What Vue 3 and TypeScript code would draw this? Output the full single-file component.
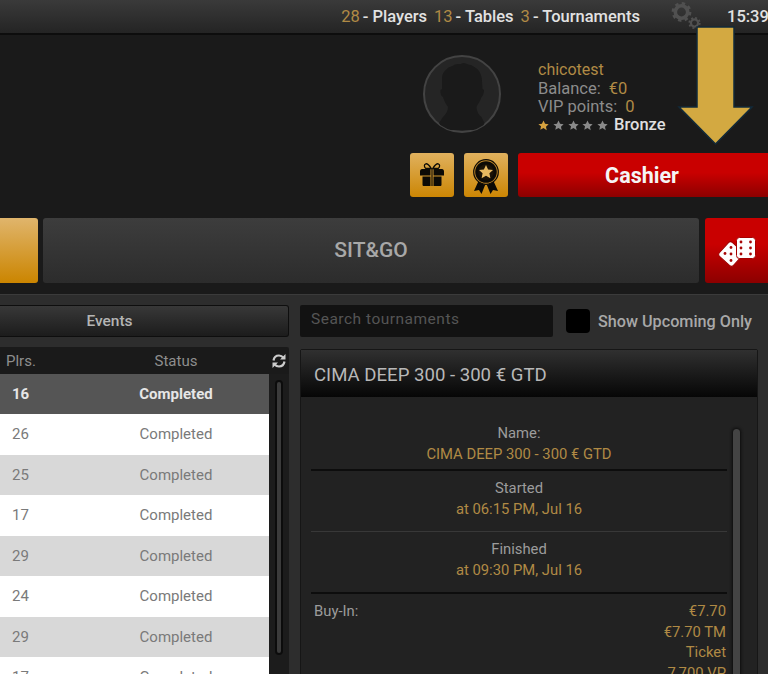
<script setup lang="ts">
const rows = [
  { plrs: 16, selected: true },
  { plrs: 26 },
  { plrs: 25 },
  { plrs: 17 },
  { plrs: 29 },
  { plrs: 24 },
  { plrs: 29 },
  { plrs: 17 },
]
const stars = [true, false, false, false, false]
const starPath = 'M6 .5l1.7 3.6 3.9.5-2.9 2.7.8 3.9L6 8.8 2.5 10.7l.8-3.9L.4 4.6l3.9-.5z'
const buyIn = ['€7.70', '€7.70 TM', 'Ticket', '7,700 VP']
</script>

<template>
  <div class="page">
    <header class="topbar">
      <div class="counts">
        <span class="num">28</span><span class="lbl">- Players</span>
        <span class="num">13</span><span class="lbl">- Tables</span>
        <span class="num">3</span><span class="lbl">- Tournaments</span>
      </div>
      <svg class="gears" width="30" height="28" viewBox="0 0 30 28" fill="none" stroke="#505050">
        <circle cx="10.5" cy="10" r="6.2" stroke-width="3.6" />
        <circle cx="10.5" cy="10" r="8.6" stroke-width="2.6" stroke-dasharray="3.4 3.35" />
        <circle cx="23.5" cy="21" r="3.6" stroke-width="2.2" />
        <circle cx="23.5" cy="21" r="5.2" stroke-width="1.8" stroke-dasharray="2 2.08" />
      </svg>
      <span class="clock">15:39</span>
    </header>

    <section class="profile">
      <div class="account">
        <svg class="avatar" width="80" height="80" viewBox="0 0 80 80">
          <defs>
            <clipPath id="avatar-clip"><circle cx="40" cy="40" r="38" /></clipPath>
          </defs>
          <circle cx="40" cy="40" r="38" fill="#252525" stroke="#434343" stroke-width="2" />
          <path
            clip-path="url(#avatar-clip)"
            fill="#1a1a1a"
            d="M20 25c0-5 2-8 5-10 2-3 5-2 7-4 3-2 6 0 9-2 3 0 5 2 8 2 3 2 6 3 8 6 2 3 3 7 3 10l.5 8 1.500 1c0 3-1 6-2.500 7-1 4-4 7-5 10 0 4 2 8 5 10l3 6-3 7H21l-4-7 4-6c3-3 5-6 5-10-2-3-4-6-5-10-2-1-3-4-2.500-7l1.500-1z"
          />
        </svg>
        <div class="player">
          <div class="name">chicotest</div>
          <div class="stat">Balance: <b>€0</b></div>
          <div class="stat">VIP points: <b>0</b></div>
          <div class="level">
            <svg
              v-for="(on, i) in stars"
              :key="i"
              width="11"
              height="11"
              viewBox="0 0 12 12"
            >
              <path :d="starPath" :fill="on ? '#d6a23f' : '#8a8a8a'" />
            </svg>
            <span>Bronze</span>
          </div>
        </div>
      </div>
      <div class="actions">
        <button class="gold">
          <svg width="28" height="28" viewBox="0 0 28 28" fill="#0c0a06">
            <path d="M13.300 7.500C11 4 9.500 2.500 7.800 2.800 5.800 3.200 6 6.300 7.800 7.500zM14.700 7.500C17 4 18.500 2.500 20.200 2.800 22.200 3.200 22 6.300 20.200 7.500z" fill="none" stroke="#0c0a06" stroke-width="1.300" />
            <path d="M2 10.500c0-1.500.8-2.500 2-2.500h8.500v6.500H2zM15.500 8H24c1.200 0 2 1 2 2.500v4H15.500zM4.500 15.500h8v9.500H6c-1 0-1.500-.5-1.500-1.500zM15.500 15.500h8v8c0 1-.5 1.500-1.500 1.500h-6.500zM13.400 8h1.200v17h-1.200z" />
          </svg>
        </button>
        <button class="gold">
          <svg width="32" height="42" viewBox="0 0 32 42" fill="none" stroke="#0c0a06">
            <path d="M8.500 27L4 37l5-1 2.500 4 4-10zM23.500 27l4.500 10-5-1-2.500 4-4-10z" fill="#0c0a06" stroke="none" />
            <circle cx="16" cy="18" r="12.300" stroke-width="1.200" fill="#c48a2a" />
            <circle cx="16" cy="18" r="9.300" fill="#1a1206" stroke-width="3" />
            <path d="M16 11l2.100 4.500 4.900.5-3.600 3.300 1 4.900-4.400-2.500-4.400 2.500 1-4.900-3.600-3.300 4.900-.5z" fill="#e6b860" stroke="none" />
          </svg>
        </button>
        <button class="cashier">Cashier</button>
      </div>
      <svg class="arrow" width="78" height="122" viewBox="0 0 78 122">
        <path d="M20 1h37v80h18L38.500 118 2 81h18z" fill="#d3a941" stroke="#122a3a" stroke-width="1.500" />
      </svg>
    </section>

    <nav class="tabs">
      <div class="tab tab-gold"></div>
      <div class="tab tab-sit">SIT&amp;GO</div>
      <div class="tab tab-red">
        <svg width="40" height="36" viewBox="0 0 40 36">
          <rect x="4.500" y="11.500" width="19" height="19" rx="3" transform="rotate(42 14 21)" fill="#fff" stroke="#a00000" stroke-width="1" />
          <g fill="#a80808">
            <circle cx="14" cy="14.500" r="1.400" />
            <circle cx="8" cy="20.500" r="1.400" />
            <circle cx="14" cy="21" r="1.400" />
            <circle cx="14" cy="27.500" r="1.400" />
          </g>
          <rect x="19.500" y="4.500" width="19" height="21" rx="3" fill="#fff" stroke="#a60000" stroke-width="1" />
          <g fill="#a80808">
            <circle cx="24" cy="9" r="1.400" /><circle cx="33.500" cy="9" r="1.400" />
            <circle cx="24" cy="15" r="1.400" /><circle cx="33.500" cy="15" r="1.400" />
            <circle cx="24" cy="21" r="1.400" /><circle cx="33.500" cy="21" r="1.400" />
          </g>
        </svg>
      </div>
    </nav>

    <main class="main">
      <section class="left">
        <button class="events">Events</button>
        <div class="list">
          <div class="list-head">
            <span class="col-plrs">Plrs.</span>
            <span class="col-status">Status</span>
            <svg class="refresh" width="16" height="16" viewBox="0 0 16 16" fill="none" stroke="#ccc" stroke-width="2.200">
              <path d="M2.500 7.500C3 4.500 5.300 2.500 8 2.500c1.800 0 3.300.8 4.300 2.200" />
              <path d="M13.500 8.500c-.5 3-2.800 5-5.500 5-1.800 0-3.300-.8-4.300-2.200" />
              <path d="M14.500 1v5.500H9zM1.500 15V9.500H7z" fill="#ccc" stroke="none" />
            </svg>
          </div>
          <div class="list-body">
            <div class="rows">
              <div
                v-for="(r, i) in rows"
                :key="i"
                class="row"
                :class="{ selected: r.selected, alt: i % 2 === 0 }"
              >
                <span class="col-plrs">{{ r.plrs }}</span>
                <span class="col-status">Completed</span>
              </div>
            </div>
            <div class="scroll"><div class="thumb"></div></div>
          </div>
        </div>
      </section>

      <section class="right">
        <div class="filters">
          <div class="search">Search tournaments</div>
          <span class="check"></span>
          <span class="check-label">Show Upcoming Only</span>
        </div>
        <div class="detail">
          <h2 class="detail-head">CIMA DEEP 300 - 300 € GTD</h2>
          <div class="detail-body">
            <div class="info">
              <div class="block first">
                <div>Name:</div>
                <div class="val">CIMA DEEP 300 - 300 € GTD</div>
              </div>
              <div class="block">
                <div>Started</div>
                <div class="val">at 06:15 PM, Jul 16</div>
              </div>
              <div class="block soft">
                <div>Finished</div>
                <div class="val">at 09:30 PM, Jul 16</div>
              </div>
              <div class="pair">
                <div>Buy-In:</div>
                <div class="amounts">
                  <div v-for="b in buyIn" :key="b" class="val">{{ b }}</div>
                </div>
              </div>
            </div>
            <div class="detail-scroll"></div>
          </div>
        </div>
      </section>
    </main>
  </div>
</template>

<style>
html, body { margin: 0; background: #1a1a1a; }
</style>

<style scoped>
.page {
  position: relative;
  width: 768px;
  height: 674px;
  overflow: hidden;
  display: flex;
  flex-direction: column;
  background: #1a1a1a;
  font-family: Roboto, "Liberation Sans", sans-serif;
  font-size: 15px;
  color: #a0a0a0;
}
.topbar {
  flex: none;
  box-sizing: border-box;
  height: 35px;
  display: flex;
  align-items: center;
  justify-content: flex-end;
  background: linear-gradient(#3a3a3a, #242424);
  border-bottom: 2px solid #0d0d0d;
  color: #e2e2e2;
  font-size: 16.500px;
  font-weight: 500;
}
.counts { display: flex; margin-right: 31px; }
.num { color: #b08a45; font-weight: 400; margin-right: 3px; }
.lbl { margin-right: 7px; }
.counts .lbl:last-child { margin-right: 0; }
.gears { margin-right: 26px; margin-top: -2px; }
.clock { width: 41px; white-space: nowrap; }

.profile {
  flex: none;
  position: relative;
  height: 183px;
  box-sizing: border-box;
  padding-top: 19px;
  display: flex;
  flex-direction: column;
  align-items: flex-end;
}
.account { display: flex; height: 99px; padding-right: 103px; }
.avatar { margin-right: 36px; }
.player { width: 127px; font-size: 16.500px; line-height: 18px; margin-top: 7px; white-space: nowrap; }
.name { color: #b08a45; font-size: 16px; margin-bottom: 1px; }
.stat { color: #8c8c8c; }
.stat b { color: #b08a45; font-weight: 400; margin-left: 4px; }
.level { display: flex; align-items: center; height: 16px; line-height: 16px; gap: 3.800px; color: #e0e0e0; font-weight: 500; margin-top: 1px; }
.level svg { flex: none; }
.level span { margin-left: 2px; }
.actions { display: flex; gap: 10px; height: 44px; }
button { padding: 0; border: 0; font-family: inherit; }
.gold {
  width: 44px;
  height: 44px;
  border-radius: 3px;
  display: flex;
  align-items: center;
  justify-content: center;
  background: linear-gradient(#e0b15e, #cc8604);
}
.cashier {
  width: 250px;
  border-radius: 3px 0 0 3px;
  background: linear-gradient(#c90000 45%, #8c0000);
  color: #f5f5f5;
  font-size: 21.500px;
  font-weight: 700;
  padding-right: 2px;
}
.arrow { position: absolute; right: 13px; top: -9px; }

.tabs {
  flex: none;
  height: 65px;
  display: flex;
  gap: 5px;
}
.tab { height: 65px; box-sizing: border-box; border-radius: 3px; }
.tab-gold {
  width: 38px;
  border-radius: 0 3px 3px 0;
  background: linear-gradient(#e0b56c, #cb8500);
}
.tab-sit {
  flex: 1;
  display: flex;
  align-items: center;
  justify-content: center;
  padding-bottom: 2px;
  background: linear-gradient(#3d3d3d, #2c2c2c);
  color: #a8a8a8;
  font-size: 21px;
  font-weight: 500;
  margin-right: 1px;
}
.tab-red {
  width: 63px;
  display: flex;
  align-items: center;
  justify-content: center;
  border-radius: 3px 0 0 3px;
  background: linear-gradient(#c90000 40%, #8c0000);
}

.main {
  flex: 1;
  min-height: 0;
  margin-top: 11px;
  box-sizing: border-box;
  padding-top: 10px;
  display: flex;
  gap: 11px;
  background: #2d2d2d;
  border-top: 1px solid #3b3b3b;
}
.left { flex: none; width: 289px; }
.events {
  display: block;
  box-sizing: border-box;
  width: 289px;
  height: 32px;
  padding-right: 69px;
  border: 1px solid #0e0e0e;
  border-left: 0;
  border-radius: 0 3px 3px 0;
  background: linear-gradient(#383838, #1c1c1c);
  color: #b4b4b4;
  font-size: 15.500px;
  font-weight: 500;
}
.list { margin-top: 10px; }
.list-head {
  position: relative;
  height: 27px;
  display: flex;
  align-items: center;
  background: #1a1a1a;
  border-radius: 0 2px 0 0;
  color: #8e8e8e;
  font-size: 15px;
}
.list-head .col-plrs { padding-left: 6px; }
.col-plrs { width: 84px; box-sizing: border-box; padding-left: 12px; }
.col-status { width: 184px; text-align: center; }
.refresh { position: absolute; right: 2px; top: 6px; }
.list-body { display: flex; }
.rows { width: 269px; }
.row {
  box-sizing: border-box;
  height: 40.500px;
  display: flex;
  align-items: center;
  background: #fff;
  color: #7a7a7a;
  font-size: 15px;
}
.row.alt { background: #d8d8d8; }
.row.selected { height: 40px; padding-bottom: 1px; background: #555; color: #e6e6e6; font-weight: 700; }
.scroll {
  flex: none;
  width: 20px;
  height: 300px;
  box-sizing: border-box;
  padding: 6px 0 0 6px;
  background: #1c1c1c;
}
.thumb {
  width: 8px;
  height: 275px;
  box-sizing: border-box;
  border-radius: 4px;
  background: #3b3b3b;
  border: 2px solid #0c0c0c;
}

.right { flex: none; width: 458px; }
.filters { display: flex; align-items: center; height: 32px; }
.search {
  box-sizing: border-box;
  width: 253px;
  height: 32px;
  line-height: 29px;
  padding-left: 11px;
  border-radius: 2px;
  background: #121212;
  color: #555;
  font-size: 15.500px;
  letter-spacing: .500px;
  white-space: nowrap;
}
.check {
  width: 24px;
  height: 24px;
  margin-left: 13px;
  border-radius: 4px;
  background: #000;
}
.check-label { margin-left: 8px; color: #a8a8a8; font-size: 16.200px; font-weight: 500; white-space: nowrap; }
.detail {
  box-sizing: border-box;
  margin-top: 12px;
  border-radius: 2px;
  border: 1px solid #161616;
  background: #222;
  height: 400px;
}
.detail-head {
  box-sizing: border-box;
  height: 47px;
  margin: 0;
  padding: 3px 0 0 13px;
  display: flex;
  align-items: center;
  background: linear-gradient(#303030, #060606);
  color: #b8b8b8;
  font-size: 18.600px;
  font-weight: 400;
  white-space: nowrap;
}
.detail-body { display: flex; padding: 26px 0 0 10px; }
.info { width: 416px; font-size: 14.800px; color: #9c9c9c; }
.block {
  text-align: center;
  height: 62px;
  box-sizing: border-box;
  padding-top: 7px;
  border-top: 2px solid #3a3a3a;
  line-height: 21px;
  border-image: linear-gradient(#0d0d0d 50%, #3a3a3a 50%) 2;
}
.block.first { height: 46px; padding-top: 0; border: 0; }
.block.soft { border-top: 1px solid #383838; border-image: none; padding-top: 7px; height: 61px; }
.pair {
  display: flex;
  justify-content: space-between;
  padding: 7px 1px 0 3px;
  line-height: 20.700px;
  border-top: 2px solid #3a3a3a;
  border-image: linear-gradient(#0d0d0d 50%, #3a3a3a 50%) 2;
}
.amounts { text-align: right; }
.val { color: #b08a45; }
.detail-scroll {
  width: 7px;
  height: 300px;
  margin: 6px 0 0 6px;
  border-radius: 4px;
  background: #444;
  box-shadow: 0 0 3px 1px #0c0c0c;
}
</style>
